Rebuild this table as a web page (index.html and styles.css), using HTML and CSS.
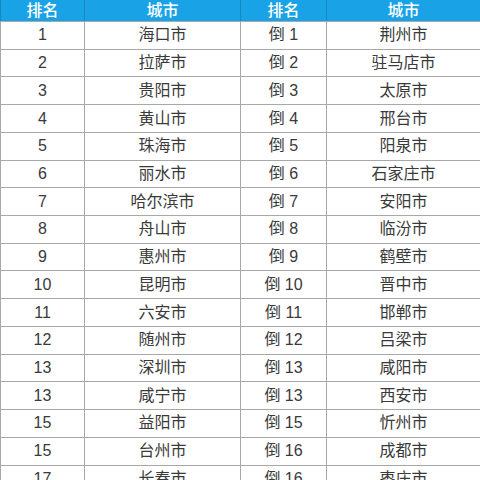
FILE: index.html
```html
<!DOCTYPE html>
<html lang="zh">
<head>
<meta charset="utf-8">
<link rel="stylesheet" href="styles.css">
</head>
<body>
<table class="rank">
<colgroup><col class="c1"><col class="c2"><col class="c3"><col class="c4"></colgroup>
<thead>
<tr><th>排名</th><th>城市</th><th>排名</th><th>城市</th></tr>
</thead>
<tbody>
<tr><td>1</td><td>海口市</td><td>倒 1</td><td>荆州市</td></tr>
<tr><td>2</td><td>拉萨市</td><td>倒 2</td><td>驻马店市</td></tr>
<tr><td>3</td><td>贵阳市</td><td>倒 3</td><td>太原市</td></tr>
<tr><td>4</td><td>黄山市</td><td>倒 4</td><td>邢台市</td></tr>
<tr><td>5</td><td>珠海市</td><td>倒 5</td><td>阳泉市</td></tr>
<tr><td>6</td><td>丽水市</td><td>倒 6</td><td>石家庄市</td></tr>
<tr><td>7</td><td>哈尔滨市</td><td>倒 7</td><td>安阳市</td></tr>
<tr><td>8</td><td>舟山市</td><td>倒 8</td><td>临汾市</td></tr>
<tr><td>9</td><td>惠州市</td><td>倒 9</td><td>鹤壁市</td></tr>
<tr><td>10</td><td>昆明市</td><td>倒 10</td><td>晋中市</td></tr>
<tr><td>11</td><td>六安市</td><td>倒 11</td><td>邯郸市</td></tr>
<tr><td>12</td><td>随州市</td><td>倒 12</td><td>吕梁市</td></tr>
<tr><td>13</td><td>深圳市</td><td>倒 13</td><td>咸阳市</td></tr>
<tr><td>13</td><td>咸宁市</td><td>倒 13</td><td>西安市</td></tr>
<tr><td>15</td><td>益阳市</td><td>倒 15</td><td>忻州市</td></tr>
<tr><td>15</td><td>台州市</td><td>倒 16</td><td>成都市</td></tr>
<tr><td>17</td><td>长春市</td><td>倒 16</td><td>枣庄市</td></tr>
</tbody>
</table>
</body>
</html>
```
FILE: styles.css
```css
html, body {
  margin: 0;
  padding: 0;
  background: #ffffff;
  overflow: hidden;
}
.rank {
  width: 480px;
  table-layout: fixed;
  border-collapse: collapse;
  font-family: "Liberation Sans", "Noto Sans CJK SC", sans-serif;
  font-size: 16px;
  color: #3a3a3a;
}
.c1 { width: 84px; }
.c2 { width: 156px; }
.c3 { width: 86px; }
.c4 { width: 154px; }
.rank th, .rank td {
  border: 1px solid #a8a8a8;
  text-align: center;
  vertical-align: middle;
  padding: 0;
}
.rank th {
  background: #19a3e6;
  color: #ffffff;
  font-weight: 500;
  height: 21px;
  line-height: 18px;
  border-top: 0;
  border-color: #1788c0;
  border-bottom-color: #a8a8a8;
}
.rank td {
  height: 26.73px;
  line-height: 20px;
}
```
